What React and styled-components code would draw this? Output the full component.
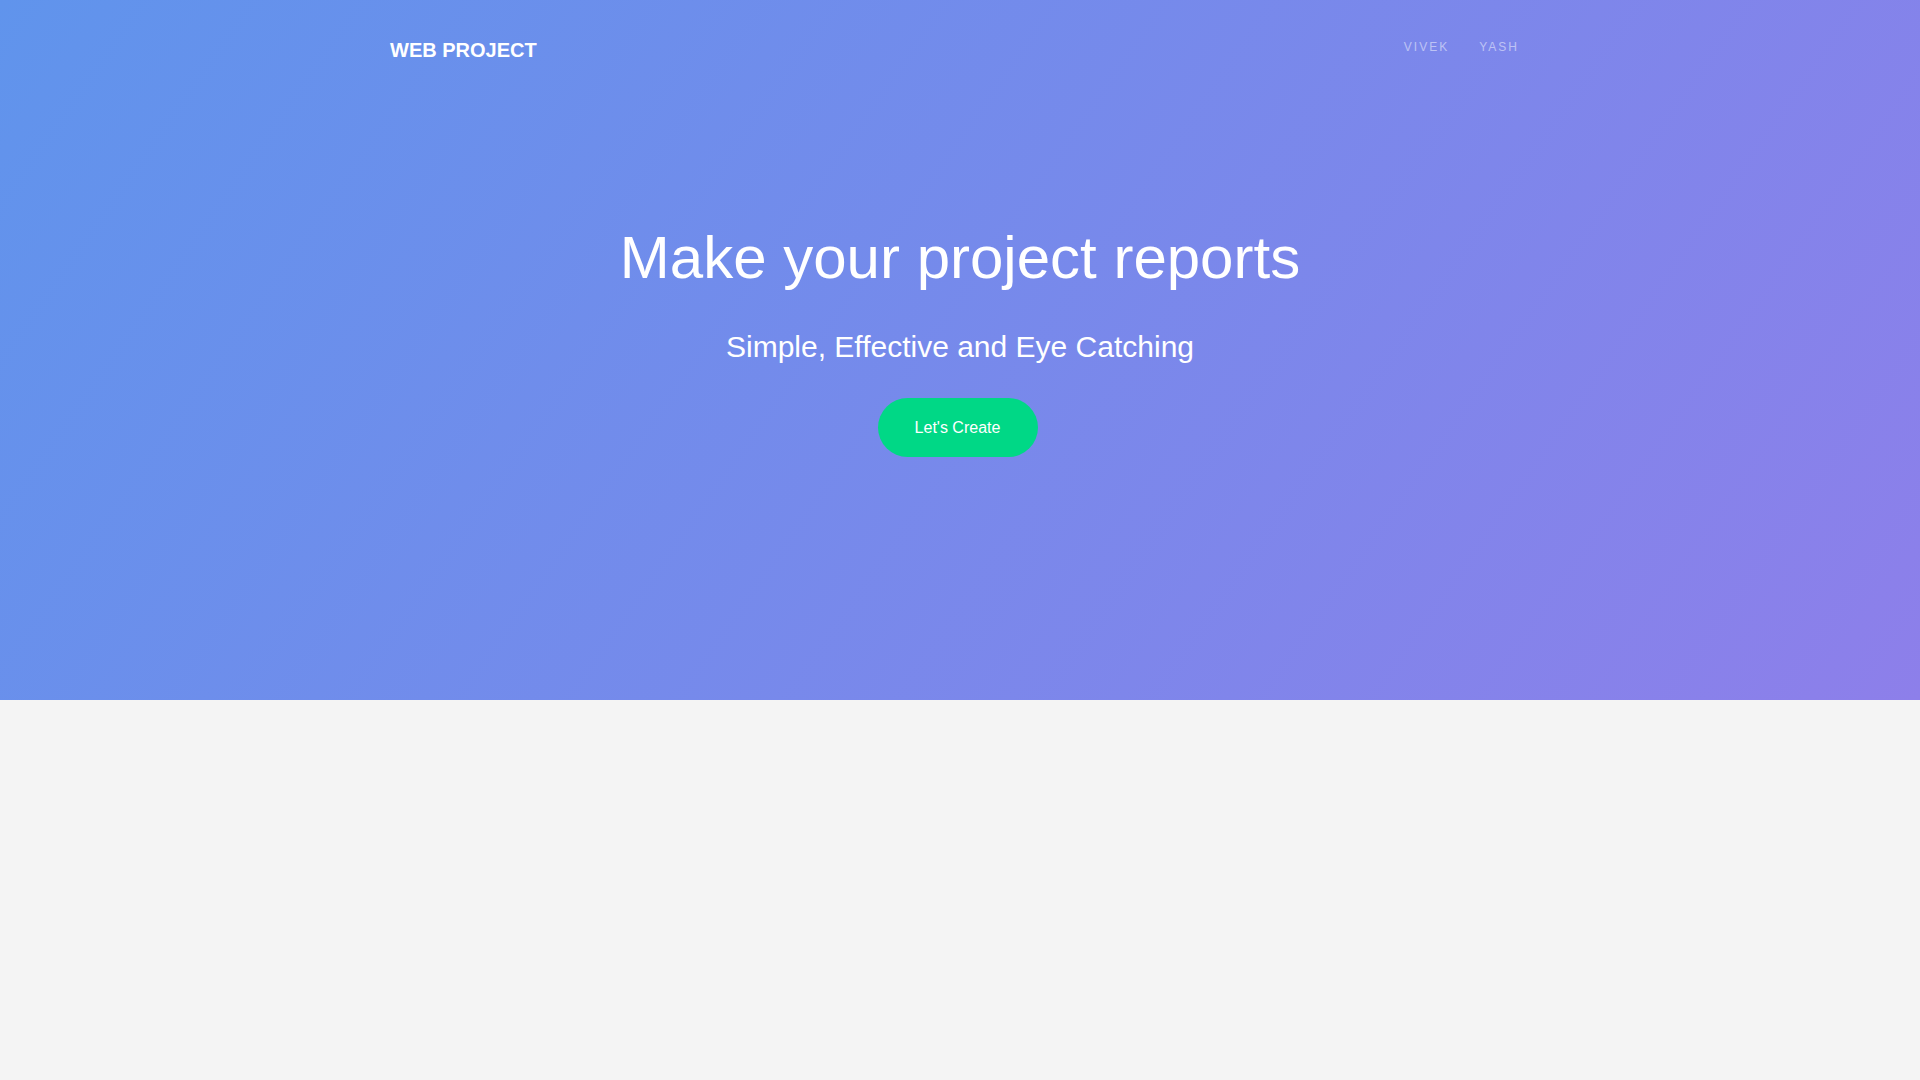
import styled, { createGlobalStyle } from "styled-components";

const GlobalStyle = createGlobalStyle`
    html, body {
        margin: 0;
        padding: 0;
        background: #f4f4f4;
        font-family: "Liberation Sans", Arial, sans-serif;
    }
`

const Hero = styled.header`
    height: 700px;
    background: linear-gradient(125deg, #6094ec, #8d7fea);
    color: #ffffff;
`
const Container = styled.div`
    width: 1140px;
    margin: 0 auto;
`
const Nav = styled.nav`
    height: 100px;
    display: flex;
    align-items: center;
    justify-content: space-between;
`
const Brand = styled.a`
    font-size: 20px;
    font-weight: 700;
    line-height: 24px;
    color: #ffffff;
    text-decoration: none;
`
const NavLinks = styled.ul`
    display: flex;
    list-style: none;
    margin: 0 -4px 6px 0;
    padding: 0;
`
const NavLink = styled.a`
    display: block;
    padding: 0 15px;
    font-size: 12px;
    line-height: 16px;
    letter-spacing: 2px;
    color: rgba(255, 255, 255, 0.5);
    text-decoration: none;
`
const Content = styled.div`
    display: flex;
    flex-direction: column;
    align-items: center;
    padding-top: 125px;
`
const Title = styled.h1`
    margin: 0;
    font-size: 60px;
    font-weight: 400;
    line-height: 66px;
`
const Subtitle = styled.h2`
    margin: 38px 0 0;
    font-size: 30px;
    font-weight: 400;
    line-height: 36px;
`
const CreateButton = styled.button`
    margin: 33px 5px 0 0;
    width: 160px;
    height: 59px;
    border: none;
    border-radius: 30px;
    background: #00d886;
    color: #ffffff;
    font-family: "Liberation Sans", Arial, sans-serif;
    font-size: 16px;
    cursor: pointer;
`

function App() {
    return (
        <>
            <GlobalStyle />
            <Hero>
                <Container>
                    <Nav>
                        <Brand href="#">WEB PROJECT</Brand>
                        <NavLinks>
                            <li><NavLink href="#">VIVEK</NavLink></li>
                            <li><NavLink href="#">YASH</NavLink></li>
                        </NavLinks>
                    </Nav>
                    <Content>
                        <Title>Make your project reports</Title>
                        <Subtitle>Simple, Effective and Eye Catching</Subtitle>
                        <CreateButton>Let's Create</CreateButton>
                    </Content>
                </Container>
            </Hero>
        </>
    );
}

export default App;
